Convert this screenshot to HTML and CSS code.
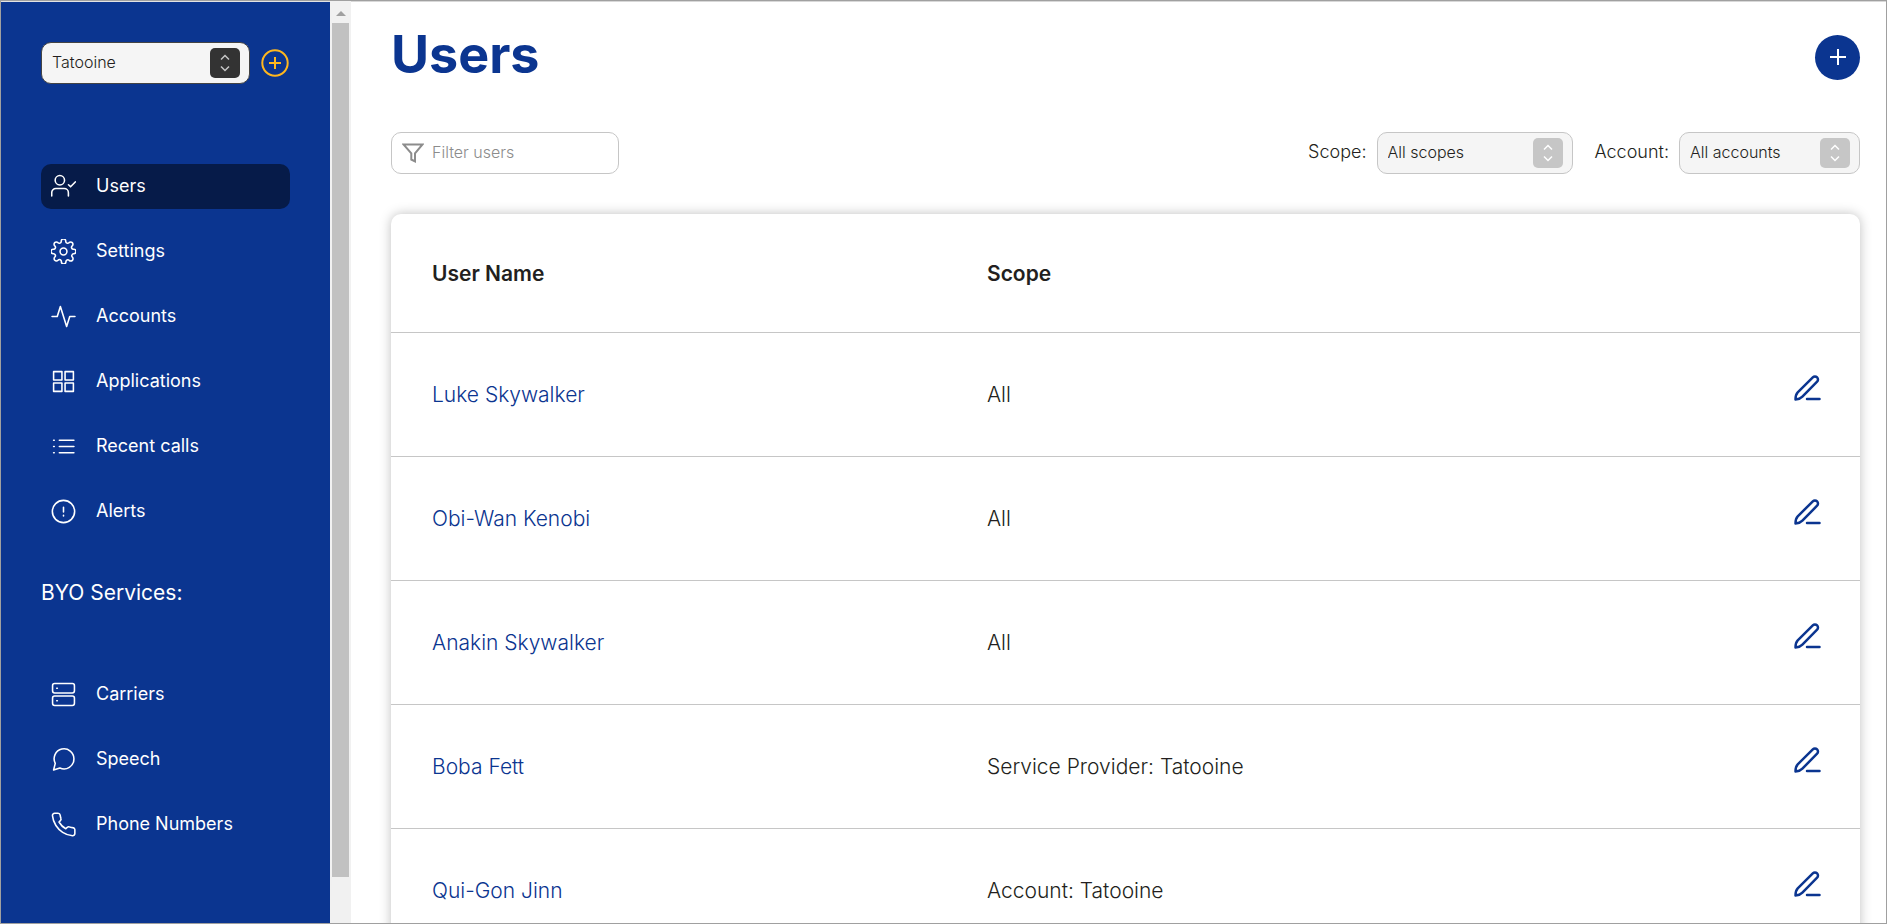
FILE: index.html
```html
<!DOCTYPE html>
<html lang="en">
<head>
<meta charset="utf-8">
<title>Users</title>
<link rel="stylesheet" href="styles.css">
</head>
<body>
<svg class="sprite" aria-hidden="true">
  <symbol id="updown" viewBox="0 0 14 20"><path d="M3 6.5 7 2.5l4 4M3 13.5l4 4 4-4"/></symbol>
  <symbol id="edit" viewBox="0 0 28 28"><path d="M2.500 25.500c0-3.200.4-5.400 2.200-7.200L19.800 3.400a3 3 0 0 1 4.300 4.300L9.400 22.600c-1.800 1.900-3.700 2.700-6.900 2.900z"/><path d="M14 25h12.500"/></symbol>
</svg>
<div class="app">
  <aside class="sidebar">
    <div class="provider">
      <div class="select select-dark">
        <select aria-label="Service provider"><option>Tatooine</option></select>
        <span class="select-arrow"><svg class="icon-updown"><use href="#updown"/></svg></span>
      </div>
      <button class="add-provider" type="button" aria-label="Add service provider">
        <svg class="icon-add" viewBox="0 0 28 28"><circle cx="14" cy="14" r="12.700"/><path d="M14 8v12M8 14h12"/></svg>
      </button>
    </div>
    <nav>
      <ul class="nav">
        <li><a class="nav-item active" href="#"><svg class="icon" viewBox="0 0 24 24"><circle cx="8.500" cy="6" r="4.500"/><path d="M.7 21v-3a4 4 0 0 1 4-4h8a4 4 0 0 1 4 4v3M16.800 10.300l2 2 4.500-4.700"/></svg><span class="nav-label">Users</span></a></li>
        <li><a class="nav-item" href="#"><svg class="icon" viewBox="0 0 24 24"><circle cx="12" cy="12" r="3.300"/><path d="M20.100 15.360a1.800 1.800 0 0 0 .36 1.990l.07.07a2.180 2.180 0 1 1-3.090 3.090l-.07-.07a1.800 1.800 0 0 0-3.050 1.280v.1a2.180 2.180 0 0 1-4.360 0v-.1a1.800 1.800 0 0 0-3.170-1.370l-.07.07a2.180 2.180 0 1 1-3.090-3.090l.07-.07a1.800 1.800 0 0 0-1.420-3.080h-.1a2.180 2.180 0 0 1 0-4.360h.1a1.800 1.800 0 0 0 1.370-3.170l-.07-.07A2.180 2.180 0 1 1 6.670 3.490l.07.07A1.800 1.800 0 0 0 9.820 2.280v-.1a2.180 2.180 0 0 1 4.360 0v.1a1.800 1.800 0 0 0 3.080 1.280l.07-.07a2.180 2.180 0 1 1 3.090 3.090l-.07.07a1.800 1.800 0 0 0 1.370 3.170h.1a2.180 2.180 0 0 1 0 4.360h-.1a1.800 1.800 0 0 0-1.620 1.180z"/></svg><span class="nav-label">Settings</span></a></li>
        <li><a class="nav-item" href="#"><svg class="icon" viewBox="0 0 24 24"><path d="M1 12h5L9 2.500l6 19 3-9.500h5"/></svg><span class="nav-label">Accounts</span></a></li>
        <li><a class="nav-item" href="#"><svg class="icon" viewBox="0 0 24 24"><path d="M2.500 2.500h8v8h-8zM13.500 2.500h8v8h-8zM2.500 13.500h8v8h-8zM13.500 13.500h8v8h-8z"/></svg><span class="nav-label">Applications</span></a></li>
        <li><a class="nav-item" href="#"><svg class="icon" viewBox="0 0 24 24"><path d="M8 6h14M8 12h14M8 18h14M2.500 6h.6M2.500 12h.6M2.500 18h.6"/></svg><span class="nav-label">Recent calls</span></a></li>
        <li><a class="nav-item" href="#"><svg class="icon" viewBox="0 0 24 24"><circle cx="12" cy="12" r="10.700"/><path d="M12 8v4.500M12 15.700v.5"/></svg><span class="nav-label">Alerts</span></a></li>
      </ul>
      <h2 class="nav-title">BYO Services:</h2>
      <ul class="nav">
        <li><a class="nav-item" href="#"><svg class="icon" viewBox="0 0 24 24"><rect x="1.500" y="1.500" width="21" height="9" rx="2"/><rect x="1.500" y="13.500" width="21" height="9" rx="2"/><path d="M5.500 6h.6M5.500 18h.6"/></svg><span class="nav-label">Carriers</span></a></li>
        <li><a class="nav-item" href="#"><svg class="icon" viewBox="0 0 24 24"><path d="M22 11.500a9.500 9.500 0 0 1-13.500 8.600L2.500 22l1.600-6.300A9.500 9.500 0 1 1 22 11.500z"/></svg><span class="nav-label">Speech</span></a></li>
        <li><a class="nav-item" href="#"><svg class="icon" viewBox="0 0 24 24"><path d="M22.900 17.500v3.200a2.100 2.100 0 0 1-2.300 2.100 21.500 21.500 0 0 1-9.400-3.300 21 21 0 0 1-6.500-6.500A21.500 21.500 0 0 1 1.400 3.500a2.100 2.100 0 0 1 2.100-2.300h3.200a2.100 2.100 0 0 1 2.100 1.800c.1 1 .4 2 .7 3a2.100 2.100 0 0 1-.5 2.300L7.700 9.600a17 17 0 0 0 6.500 6.500l1.300-1.300a2.100 2.100 0 0 1 2.300-.5c1 .3 2 .6 3 .7a2.100 2.100 0 0 1 2.100 2.500z"/></svg><span class="nav-label">Phone Numbers</span></a></li>
      </ul>
    </nav>
  </aside>
  <div class="scrollbar" aria-hidden="true">
    <svg class="scroll-up" viewBox="0 0 10 5"><path d="M0 5 5 0l5 5z"/></svg>
    <div class="scroll-thumb"></div>
  </div>
  <main class="main">
    <header class="page-head">
      <h1>Users</h1>
      <button class="add-user" type="button" aria-label="Add user"><svg class="icon-plus" viewBox="0 0 18 18"><path d="M9 1v16M1 9h16"/></svg></button>
    </header>
    <section class="filters">
      <label class="search">
        <svg class="icon-filter" viewBox="0 0 22 20"><path d="M1.500 1.500h19L13 10.300v8l-3.700-1.800v-6.200z"/></svg>
        <input type="text" placeholder="Filter users" aria-label="Filter users">
      </label>
      <div class="filter-group">
        <div class="field">
          <label for="scope">Scope:</label>
          <div class="select select-scope">
            <select id="scope"><option>All scopes</option></select>
            <span class="select-arrow"><svg class="icon-updown"><use href="#updown"/></svg></span>
          </div>
        </div>
        <div class="field">
          <label for="account">Account:</label>
          <div class="select select-account">
            <select id="account"><option>All accounts</option></select>
            <span class="select-arrow"><svg class="icon-updown"><use href="#updown"/></svg></span>
          </div>
        </div>
      </div>
    </section>
    <div class="card">
      <table>
        <thead><tr><th class="col-name" scope="col">User Name</th><th scope="col">Scope</th><th class="col-edit"></th></tr></thead>
        <tbody>
          <tr><td><a href="#">Luke Skywalker</a></td><td>All</td><td class="col-edit"><a class="edit" href="#" aria-label="Edit Luke Skywalker"><svg class="icon-edit"><use href="#edit"/></svg></a></td></tr>
          <tr><td><a href="#">Obi-Wan Kenobi</a></td><td>All</td><td class="col-edit"><a class="edit" href="#" aria-label="Edit Obi-Wan Kenobi"><svg class="icon-edit"><use href="#edit"/></svg></a></td></tr>
          <tr><td><a href="#">Anakin Skywalker</a></td><td>All</td><td class="col-edit"><a class="edit" href="#" aria-label="Edit Anakin Skywalker"><svg class="icon-edit"><use href="#edit"/></svg></a></td></tr>
          <tr><td><a href="#">Boba Fett</a></td><td>Service Provider: Tatooine</td><td class="col-edit"><a class="edit" href="#" aria-label="Edit Boba Fett"><svg class="icon-edit"><use href="#edit"/></svg></a></td></tr>
          <tr><td><a href="#">Qui-Gon Jinn</a></td><td>Account: Tatooine</td><td class="col-edit"><a class="edit" href="#" aria-label="Edit Qui-Gon Jinn"><svg class="icon-edit"><use href="#edit"/></svg></a></td></tr>
        </tbody>
      </table>
    </div>
  </main>
</div>
</body>
</html>
```
FILE: styles.css
```css
* { box-sizing: border-box; }

body {
  margin: 0;
  font-family: Inter, "Liberation Sans", sans-serif;
  font-weight: 300;
  color: #231f20;
  background: #fff;
}

h1, h2, ul { margin: 0; padding: 0; }
ul { list-style: none; }
a { color: #0b3590; text-decoration: none; }
button { padding: 0; border: 0; background: none; cursor: pointer; }
svg { display: block; fill: none; stroke: currentColor; }
.sprite { position: absolute; width: 0; height: 0; }

.app {
  display: flex;
  height: 100vh;
  overflow: hidden;
  border: 1px solid #a0a0a0;
}

/* Sidebar */
.sidebar {
  flex: none;
  width: 329px;
  padding: 40px;
  overflow: hidden;
  background: #0b3590;
  border-top: 1px solid #e3e3e3;
  color: #fff;
}

.provider {
  display: flex;
  align-items: center;
  gap: 11px;
  margin-bottom: 80px;
  padding-right: 1px;
}
.provider .select { flex: 1; }
.add-provider { color: #ffb71e; }
.icon-add { width: 28px; height: 28px; stroke-width: 2; }

.nav { display: grid; gap: 20px; }
.nav-item {
  display: flex;
  align-items: center;
  gap: 20px;
  height: 45px;
  padding: 0 10px;
  border-radius: 10px;
  color: #fff;
  font-size: 18px;
  font-weight: 400;
}
.nav-item.active { background: #061b49; }
.nav-label { padding-bottom: 3px; }
.icon { width: 25px; height: 25px; stroke-width: 1.5; stroke-linecap: round; stroke-linejoin: round; }
.nav-title {
  margin: 45px 0 65px;
  font-size: 21px;
  font-weight: 400;
  line-height: 28px;
}

/* Scrollbar */
.scrollbar {
  flex: none;
  width: 21px;
  padding: 10px 2px 0;
  background: #f1f1f1;
}
.scroll-up { width: 10px; height: 5px; margin: 0 auto 7px; fill: #a0a0a0; stroke: none; }
.scroll-thumb { height: calc(100% - 58px); background: #c1c1c1; }

/* Main */
.main {
  flex: 1;
  padding: 20px 26px 0 40px;
  border-top: 1px solid #d8d8d8;
}
.page-head {
  display: flex;
  justify-content: space-between;
  align-items: center;
  height: 70px;
}
h1 { color: #0b3590; font-size: 52px; font-weight: 700; line-height: 60px; padding-bottom: 4px; }
.add-user {
  display: grid;
  place-items: center;
  width: 45px;
  height: 45px;
  border-radius: 50%;
  background: #0b3590;
  color: #fff;
}
.icon-plus { width: 18px; height: 18px; stroke-width: 2; }

.filters {
  display: flex;
  justify-content: space-between;
  margin: 40px 0;
}
.search {
  display: flex;
  align-items: center;
  gap: 8px;
  width: 228px;
  height: 42px;
  padding: 0 10px;
  border: 1px solid #c6c6c6;
  border-radius: 10px;
  color: #8c8c8c;
}
.search input {
  flex: 1;
  min-width: 0;
  padding: 0 0 2px;
  border: 0;
  outline: 0;
  background: none;
  font: inherit;
  font-size: 16px;
}
.search input::placeholder { color: #8c8c8c; }
.icon-filter { width: 22px; height: 20px; stroke-width: 2; }

.filter-group { display: flex; gap: 22px; }
.field { display: flex; align-items: center; gap: 10px; font-size: 18px; }
.field label { padding-bottom: 3px; }

.select { position: relative; height: 42px; }
.select select {
  appearance: none;
  width: 100%;
  height: 100%;
  padding: 0 46px 2px 10px;
  border: 1px solid #c6c6c6;
  border-radius: 10px;
  background: #f5f5f5;
  color: #231f20;
  font: inherit;
  font-size: 16px;
}
.select-dark select { border-color: #444; }
.select-scope { width: 196px; }
.select-account { width: 181px; }
.select-arrow {
  position: absolute;
  top: 6px;
  right: 10px;
  display: grid;
  place-items: center;
  width: 30px;
  height: 30px;
  border-radius: 5px;
  background: #c6c6c6;
  color: #fff;
  pointer-events: none;
}
.select-dark .select-arrow { background: #333; color: #c6c6c6; }
.icon-updown { width: 14px; height: 20px; stroke-width: 1.5; }

/* Users table */
.card {
  border-radius: 10px;
  box-shadow: 0 0 12px rgba(0, 0, 0, 0.25);
  background: #fff;
}
table {
  width: 100%;
  border-collapse: separate;
  border-spacing: 0;
  table-layout: fixed;
  font-size: 21px;
  text-align: left;
}
th { height: 118px; padding: 0 0 0 41px; font-weight: 600; }
td { height: 124px; padding: 0 0 0 41px; border-top: 1px solid #c6c6c6; }
th + th, td + td { padding-left: 0; }
.col-name { width: 40.57%; }
.col-edit { width: 120px; }
td.col-edit { padding-right: 39px; }
.edit { display: flex; justify-content: flex-end; padding-bottom: 14px; }
.icon-edit { width: 28px; height: 28px; stroke-width: 2.5; stroke-linecap: round; stroke-linejoin: round; }
```
